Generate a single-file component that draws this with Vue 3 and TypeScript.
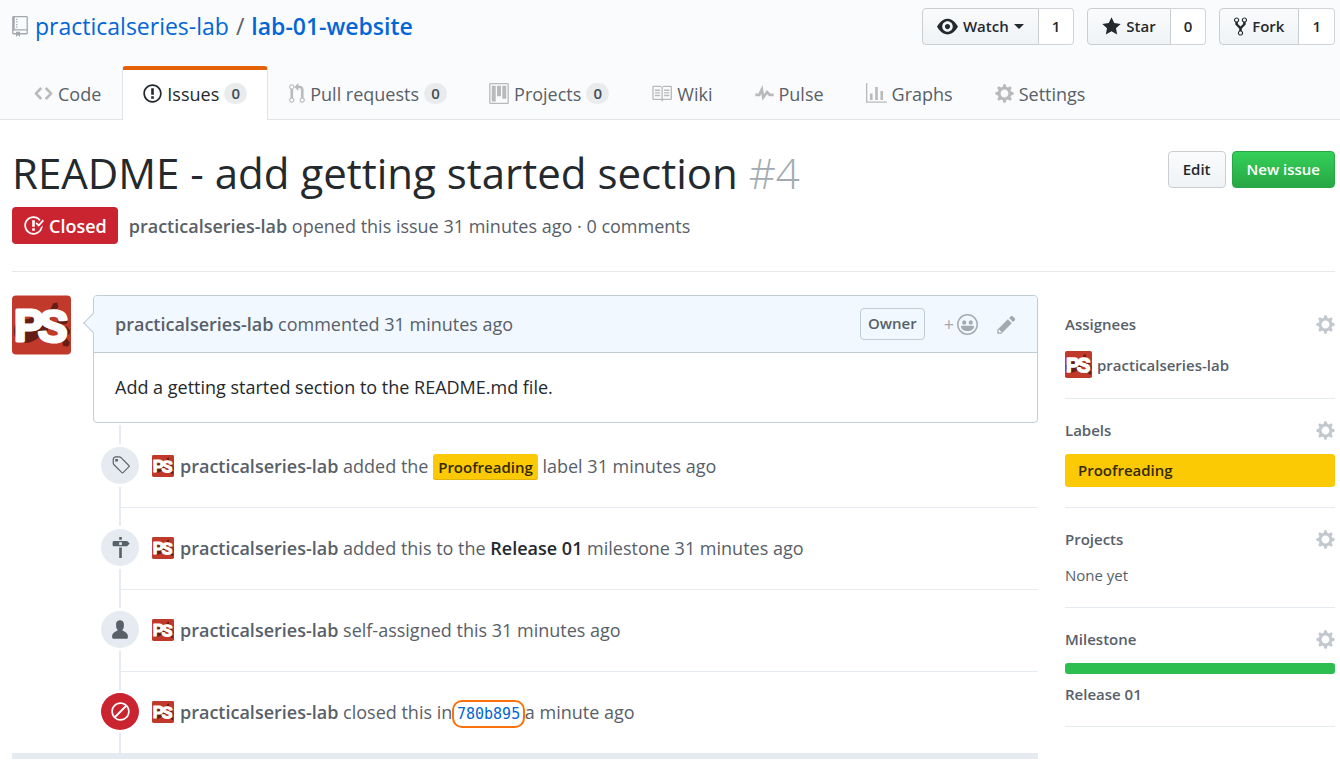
<script setup lang="ts">
import { h } from 'vue'

type Glyph = { w: number; d: string }

const glyphs: Record<string, Glyph> = {
  repo: { w: 12, d: 'M4 9H3V8h1v1zm0-3H3v1h1V6zm0-2H3v1h1V4zm0-2H3v1h1V2zm8-1v12c0 .55-.45 1-1 1H6v2l-1.5-1.5L3 16v-2H1c-.55 0-1-.45-1-1V1c0-.55.45-1 1-1h10c.55 0 1 .45 1 1zm-1 10H1v2h2v-1h3v1h5v-2zm0-10H2v9h9V1z' },
  code: { w: 14, d: 'M9.5 3L8 4.5 11.5 8 8 11.5 9.5 13 14 8 9.5 3zm-5 0L0 8l4.5 5L6 11.5 2.5 8 6 4.5 4.5 3z' },
  issue: { w: 14, d: 'M7 2.3c3.14 0 5.7 2.56 5.7 5.7s-2.56 5.7-5.7 5.7A5.71 5.71 0 0 1 1.3 8c0-3.14 2.56-5.7 5.7-5.7zM7 1C3.14 1 0 4.14 0 8s3.14 7 7 7 7-3.14 7-7-3.14-7-7-7zm1 3H6v5h2V4zm0 6H6v2h2v-2z' },
  pull: { w: 12, d: 'M11 11.28V5c-.03-.78-.34-1.47-.94-2.06C9.46 2.35 8.78 2.03 8 2H7V0L4 3l3 3V4h1c.27.02.48.11.69.31.21.2.3.42.31.69v6.28A1.993 1.993 0 0 0 10 15a1.993 1.993 0 0 0 1-3.72zm-1 2.92c-.66 0-1.2-.55-1.2-1.2 0-.65.55-1.2 1.2-1.2.65 0 1.2.55 1.2 1.2 0 .65-.55 1.2-1.2 1.2zM4 3c0-1.11-.89-2-2-2a1.993 1.993 0 0 0-1 3.72v6.56A1.993 1.993 0 0 0 2 15a1.993 1.993 0 0 0 1-3.72V4.72c.59-.34 1-.98 1-1.72zm-.8 10c0 .66-.55 1.2-1.2 1.2-.65 0-1.2-.55-1.2-1.2 0-.65.55-1.2 1.2-1.2.65 0 1.2.55 1.2 1.2zM2 4.2C1.34 4.2.8 3.65.8 3c0-.65.55-1.2 1.2-1.2.65 0 1.2.55 1.2 1.2 0 .65-.55 1.2-1.2 1.2z' },
  project: { w: 15, d: 'M10 12h3V2h-3v10zm-4-2h3V2H6v8zm-4 4h3V2H2v12zm-1 1h13V1H1v14zM14 0H1a1 1 0 0 0-1 1v14a1 1 0 0 0 1 1h13a1 1 0 0 0 1-1V1a1 1 0 0 0-1-1z' },
  book: { w: 16, d: 'M3 5h4v1H3V5zm0 3h4V7H3v1zm0 2h4V9H3v1zm11-5h-4v1h4V5zm0 2h-4v1h4V7zm0 2h-4v1h4V9zm2-6v9c0 .55-.45 1-1 1H9.5l-1 1-1-1H2c-.55 0-1-.45-1-1V3c0-.55.45-1 1-1h5.5l1 1 1-1H15c.55 0 1 .45 1 1zm-8 .5L7.5 3H2v9h6V3.5zm7-.5H9.5l-.5.5V12h6V3z' },
  pulse: { w: 14, d: 'M11.5 8L8.8 5.4 6.6 8.5 5.5 1.6 2.38 8H0v2h3.6l.9-1.8.9 5.4L9 8.5l1.6 1.5H14V8h-2.5z' },
  graph: { w: 16, d: 'M16 14v1H0V0h1v14h15zM5 13H3V8h2v5zm4 0H7V3h2v10zm4 0h-2V6h2v7z' },
  gear: { w: 14, d: 'M14 8.77v-1.6l-1.94-.64-.45-1.09.88-1.84-1.13-1.13-1.81.91-1.09-.45-.69-1.92h-1.6l-.63 1.94-1.11.45-1.84-.88-1.13 1.13.91 1.81-.45 1.09L0 7.23v1.59l1.94.64.45 1.09-.88 1.84 1.13 1.13 1.81-.91 1.09.45.69 1.92h1.59l.63-1.94 1.11-.45 1.84.88 1.13-1.13-.92-1.81.47-1.09L14 8.75v.02zM7 11c-1.66 0-3-1.34-3-3s1.34-3 3-3 3 1.34 3 3-1.34 3-3 3z' },
  eye: { w: 16, d: 'M8.06 2C3 2 0 8 0 8s3 6 8.06 6C13 14 16 8 16 8s-3-6-7.94-6zM8 12c-2.2 0-4-1.78-4-4 0-2.2 1.8-4 4-4 2.22 0 4 1.8 4 4 0 2.22-1.78 4-4 4zm2-4c0 1.11-.89 2-2 2-1.11 0-2-.89-2-2 0-1.11.89-2 2-2 1.11 0 2 .89 2 2z' },
  star: { w: 14, d: 'M14 6l-4.9-.64L7 1 4.9 5.36 0 6l3.6 3.26L2.67 14 7 11.67 11.33 14l-.93-4.74L14 6z' },
  fork: { w: 10, d: 'M8 1a1.993 1.993 0 0 0-1 3.72V6L5 8 3 6V4.72A1.993 1.993 0 0 0 2 1a1.993 1.993 0 0 0-1 3.72V6.5l3 3v1.78A1.993 1.993 0 0 0 5 15a1.993 1.993 0 0 0 1-3.72V9.5l3-3V4.72A1.993 1.993 0 0 0 8 1zM2 4.2C1.34 4.2.8 3.65.8 3c0-.65.55-1.2 1.2-1.2.65 0 1.2.55 1.2 1.2 0 .65-.55 1.2-1.2 1.2zm3 10c-.66 0-1.2-.55-1.2-1.2 0-.65.55-1.2 1.2-1.2.65 0 1.2.55 1.2 1.2 0 .65-.55 1.2-1.2 1.2zm3-10c-.66 0-1.2-.55-1.2-1.2 0-.65.55-1.2 1.2-1.2.65 0 1.2.55 1.2 1.2 0 .65-.55 1.2-1.2 1.2z' },
  closed: { w: 16, d: 'M7 10h2v2H7v-2zm2-6H7v5h2V4zm1.5 1.5l-1 1L12 9l4-4.5-1-1L12 7l-1.5-1.5zM8 13.7A5.71 5.71 0 0 1 2.3 8c0-3.14 2.56-5.7 5.7-5.7 1.83 0 3.45.88 4.5 2.2l.92-.92A6.947 6.947 0 0 0 8 1C4.14 1 1 4.14 1 8s3.14 7 7 7 7-3.14 7-7l-1.52 1.52c-.66 2.41-2.86 4.19-5.48 4.19v-.01z' },
  smiley: { w: 16, d: 'M8 0C3.58 0 0 3.58 0 8s3.58 8 8 8 8-3.58 8-8-3.58-8-8-8zm4.81 12.81a6.72 6.72 0 0 1-2.17 1.45c-.83.36-1.72.53-2.64.53-.92 0-1.81-.17-2.64-.53-.81-.34-1.55-.83-2.17-1.45a6.773 6.773 0 0 1-1.45-2.17A6.59 6.59 0 0 1 1.21 8c0-.92.17-1.81.53-2.64.34-.81.83-1.55 1.45-2.17.62-.62 1.36-1.11 2.17-1.45A6.59 6.59 0 0 1 8 1.21c.92 0 1.81.17 2.64.53.81.34 1.55.83 2.17 1.45.62.62 1.11 1.36 1.45 2.17.36.83.53 1.72.53 2.64 0 .92-.17 1.81-.53 2.64-.34.81-.83 1.55-1.45 2.17zM4 6.8v-.59c0-.66.53-1.19 1.2-1.19h.59c.66 0 1.19.53 1.19 1.19v.59c0 .67-.53 1.2-1.19 1.2H5.2C4.53 8 4 7.47 4 6.8zm5 0v-.59c0-.66.53-1.19 1.2-1.19h.59c.66 0 1.19.53 1.19 1.19v.59c0 .67-.53 1.2-1.19 1.2h-.59C9.53 8 9 7.47 9 6.8zm4 3.2c-.72 1.88-2.91 3-5 3s-4.28-1.13-5-3c-.14-.39.23-1 .66-1h8.59c.41 0 .89.61.75 1z' },
  pencil: { w: 14, d: 'M0 12v3h3l8-8-3-3-8 8zm3 2H1v-2h1v1h1v1zm10.3-9.3L12 6 9 3l1.3-1.3a.996.996 0 0 1 1.41 0l1.59 1.59c.39.39.39 1.02 0 1.41z' },
  tag: { w: 14, d: 'M7.73 1.73C7.26 1.26 6.62 1 5.96 1H3.5C2.13 1 1 2.13 1 3.5v2.47c0 .66.27 1.3.73 1.77l6.06 6.06c.39.39 1.02.39 1.41 0l4.59-4.59a.996.996 0 0 0 0-1.41L7.73 1.73zM2.38 7.09c-.31-.3-.47-.7-.47-1.13V3.5c0-.88.72-1.59 1.59-1.59h2.47c.42 0 .83.16 1.13.47l6.14 6.13-4.73 4.73-6.13-6.15zM3.01 3h2v2H3V3h.01z' },
  milestone: { w: 14, d: 'M8 2H6V0h2v2zm4 5H2c-.55 0-1-.45-1-1V4c0-.55.45-1 1-1h10l2 2-2 2zM8 4H6v2h2V4zM6 16h2V8H6v8z' },
  person: { w: 12, d: 'M12 14.002a.998.998 0 0 1-.998.998H1.001A1 1 0 0 1 0 13.999V13c0-2.633 4-4 4-4s.229-.409 0-1c-.841-.62-.944-1.59-1-4 .173-2.413 1.867-3 3-3s2.827.586 3 3c-.056 2.41-.159 3.38-1 4-.229.59 0 1 0 1s4 1.367 4 4v1.002z' },
  slash: { w: 14, d: 'M7 1C3.14 1 0 4.14 0 8s3.14 7 7 7 7-3.14 7-7-3.14-7-7-7zm0 1.3c1.3 0 2.5.44 3.47 1.17l-8 8A5.755 5.755 0 0 1 1.3 8c0-3.14 2.56-5.7 5.7-5.7zm0 11.41c-1.3 0-2.5-.44-3.47-1.17l8-8c.73.97 1.17 2.17 1.17 3.47 0 3.14-2.56 5.7-5.7 5.7z' },
}

const Icon = (props: { name: string }) => {
  const g = glyphs[props.name]
  return h(
    'svg',
    {
      viewBox: `0 0 ${g.w} 16`,
      width: Math.round((g.w * 4) / 3),
      height: 21,
      fill: 'currentColor',
      'fill-rule': 'evenodd',
      'aria-hidden': 'true',
    },
    [h('path', { d: g.d })],
  )
}
Icon.props = ['name']

const Avatar = () =>
  h('svg', { viewBox: '0 0 60 60', role: 'img', 'aria-label': 'practicalseries-lab' }, [
    h('rect', { width: 60, height: 60, rx: 4, fill: '#c0392b' }),
    h('path', {
      fill: '#641e16',
      d: 'M2 36c0-8 6-12 14-12l22-8 4-8 4-1 1 5-7 9-4 16-12 8c-6 4-12 4-17 1-4-3-5-6-5-10zM46 26l8-2 3 3-2 2-8 1zM55 31l4 4v4l-4 2-4-4zM55 43l4 5-2 4-5-1-1-4z',
    }),
    h(
      'g',
      {
        fill: '#fff',
        stroke: '#fff',
        'stroke-width': 3,
        'stroke-linejoin': 'round',
        'font-family': '"Liberation Sans", sans-serif',
        'font-weight': 700,
        'font-size': 45,
      },
      [
        h('text', { x: 2, y: 46 }, 'P'),
        h('text', { x: 27, y: 47, transform: 'rotate(5 42 30)' }, 'S'),
      ],
    ),
  ])

const actions = [
  { icon: 'eye', label: 'Watch', count: 1, menu: true },
  { icon: 'star', label: 'Star', count: 0, menu: false },
  { icon: 'fork', label: 'Fork', count: 1, menu: false },
]

const tabs: { icon: string; label: string; count?: number; current?: boolean }[] = [
  { icon: 'code', label: 'Code' },
  { icon: 'issue', label: 'Issues', count: 0, current: true },
  { icon: 'pull', label: 'Pull requests', count: 0 },
  { icon: 'project', label: 'Projects', count: 0 },
  { icon: 'book', label: 'Wiki' },
  { icon: 'pulse', label: 'Pulse' },
  { icon: 'graph', label: 'Graphs' },
  { icon: 'gear', label: 'Settings' },
]

const user = 'practicalseries-lab'

type Event = {
  icon: string
  before: string
  after: string
  kind: 'label' | 'milestone' | 'commit' | 'plain'
  target?: string
}

const events: Event[] = [
  { icon: 'tag', before: 'added the', kind: 'label', target: 'Proofreading', after: 'label 31 minutes ago' },
  { icon: 'milestone', before: 'added this to the', kind: 'milestone', target: 'Release 01', after: 'milestone 31 minutes ago' },
  { icon: 'person', before: 'self-assigned this', kind: 'plain', after: '31 minutes ago' },
  { icon: 'slash', before: 'closed this in', kind: 'commit', target: '780b895', after: 'a minute ago' },
]
</script>

<template>
  <div class="page">
    <header class="repo-head">
      <div class="repo-bar">
        <h1 class="repo-name">
          <Icon name="repo" class="repo-icon" />
          <a href="#">{{ user }}</a>
          <span class="sep">/</span>
          <a href="#" class="strong">lab-01-website</a>
        </h1>
        <div class="actions">
          <div v-for="a in actions" :key="a.label" class="action">
            <button type="button" class="btn">
              <Icon :name="a.icon" />{{ a.label }}<span v-if="a.menu" class="caret"></span>
            </button>
            <a href="#" class="social">{{ a.count }}</a>
          </div>
        </div>
      </div>
      <nav class="tabs" aria-label="Repository">
        <a v-for="t in tabs" :key="t.label" href="#" class="tab" :class="{ current: t.current }">
          <Icon :name="t.icon" />{{ t.label }}<span v-if="t.count !== undefined" class="counter">{{ t.count }}</span>
        </a>
      </nav>
    </header>

    <main class="content">
      <section class="issue-head">
        <div class="title-row">
          <h2 class="title">README - add getting started section <span class="number">#4</span></h2>
          <div class="title-actions">
            <button type="button" class="btn">Edit</button>
            <button type="button" class="btn primary">New issue</button>
          </div>
        </div>
        <div class="meta">
          <span class="state"><Icon name="closed" />Closed</span>
          <span><a href="#" class="strong">{{ user }}</a> opened this issue 31 minutes ago · 0 comments</span>
        </div>
      </section>

      <div class="columns">
        <section class="discussion">
          <div class="thread">
            <Avatar class="avatar-large" />
            <article class="comment">
              <header class="comment-head">
                <p><a href="#" class="strong">{{ user }}</a> commented 31 minutes ago</p>
                <div class="comment-tools">
                  <span class="owner">Owner</span>
                  <button type="button" class="icon-btn" aria-label="Add your reaction"><span class="plus">+</span><Icon name="smiley" /></button>
                  <button type="button" class="icon-btn" aria-label="Edit comment"><Icon name="pencil" /></button>
                </div>
              </header>
              <p class="comment-body">Add a getting started section to the README.md file.</p>
            </article>
          </div>

          <ol class="timeline">
            <li v-for="e in events" :key="e.icon" class="event">
              <span class="dot" :class="{ red: e.kind === 'commit' }"><Icon :name="e.icon" /></span>
              <Avatar class="avatar-small" />
              <p>
                <a href="#" class="strong">{{ user }}</a> {{ e.before }}
                <a v-if="e.kind === 'label'" href="#" class="label">{{ e.target }}</a>
                <a v-else-if="e.kind === 'milestone'" href="#" class="milestone">{{ e.target }}</a>
                <a v-else-if="e.kind === 'commit'" href="#" class="commit">{{ e.target }}</a>
                {{ e.after }}
              </p>
            </li>
          </ol>
        </section>

        <aside class="sidebar">
          <section class="side">
            <div class="side-head assignees-head"><h3>Assignees</h3><button type="button" class="icon-btn gear" aria-label="Edit assignees"><Icon name="gear" /></button></div>
            <a href="#" class="assignee"><Avatar class="avatar-medium" />{{ user }}</a>
          </section>
          <section class="side">
            <div class="side-head"><h3>Labels</h3><button type="button" class="icon-btn gear" aria-label="Edit labels"><Icon name="gear" /></button></div>
            <a href="#" class="label-wide">Proofreading</a>
          </section>
          <section class="side">
            <div class="side-head"><h3>Projects</h3><button type="button" class="icon-btn gear" aria-label="Edit projects"><Icon name="gear" /></button></div>
            <p>None yet</p>
          </section>
          <section class="side">
            <div class="side-head"><h3>Milestone</h3><button type="button" class="icon-btn gear" aria-label="Edit milestone"><Icon name="gear" /></button></div>
            <div class="progress" role="img" aria-label="100% complete"></div>
            <a href="#" class="strong">Release 01</a>
          </section>
        </aside>
      </div>
    </main>
  </div>
</template>

<style>
body {
  margin: 0;
  background: #fff;
}
</style>

<style scoped>
.page {
  color: #586069;
  font-family: "Open Sans", "Noto Sans", sans-serif;
  font-size: 18px;
  line-height: 24px;
}
h1, h2, h3, p, ol {
  margin: 0;
  padding: 0;
  font-weight: 400;
}
a {
  color: inherit;
  text-decoration: none;
}
button {
  font: inherit;
  cursor: pointer;
}
svg {
  display: block;
  flex: none;
}
.strong {
  font-weight: 600;
}

.repo-head {
  background: #fafbfc;
  border-bottom: 1px solid #e1e4e8;
}
.repo-bar {
  display: flex;
  justify-content: space-between;
  align-items: flex-start;
  height: 58px;
  padding: 8px 5px 0 12px;
}
.repo-name {
  display: flex;
  align-items: center;
  gap: 7px;
  font-size: 23px;
  line-height: 37px;
}
.repo-name a {
  color: #0366d6;
}
.repo-icon {
  color: #a3a8ad;
}
.actions {
  display: flex;
  gap: 13px;
}
.action {
  display: flex;
}
.btn {
  display: flex;
  align-items: center;
  justify-content: center;
  gap: 5px;
  height: 37px;
  padding: 0 14px 1px;
  border: 1px solid #cbced1;
  border-radius: 4px;
  background: linear-gradient(#fafbfc, #eff3f6);
  color: #24292e;
  font-size: 15px;
  font-weight: 600;
  white-space: nowrap;
}
.action .btn {
  border-radius: 4px 0 0 4px;
}
.social {
  display: flex;
  align-items: center;
  padding: 0 13px 1px;
  border: 1px solid #d1d5da;
  border-left: 0;
  border-radius: 0 4px 4px 0;
  background: #fff;
  color: #24292e;
  font-size: 15px;
  font-weight: 600;
}
.caret {
  border: 5px solid transparent;
  border-top-color: currentColor;
  border-bottom: 0;
}
.tabs {
  display: flex;
  height: 54px;
  margin-bottom: -1px;
  padding-left: 13px;
}
.tab {
  display: flex;
  align-items: center;
  gap: 5px;
  padding: 0 20px 3px;
  border: 1px solid transparent;
  border-top: 4px solid transparent;
  border-bottom: 0;
  border-radius: 4px 4px 0 0;
  white-space: nowrap;
}
.tab svg {
  color: #b8babc;
}
.current {
  border-color: #e36209 #e1e4e8 transparent;
  background: #fff;
  color: #24292e;
}
.current svg {
  color: #24292e;
}
.counter {
  min-width: 9px;
  padding: 0 7px;
  border-radius: 11px;
  background: #e9ebec;
  color: #444d56;
  font-size: 15px;
  font-weight: 600;
  line-height: 21px;
  text-align: center;
}

.content {
  padding: 27px 5px 0 12px;
}
.issue-head {
  padding-bottom: 27px;
  border-bottom: 1px solid #e6e8eb;
}
.title-row {
  display: flex;
  justify-content: space-between;
  align-items: flex-start;
}
.title {
  color: #24292e;
  font-size: 42px;
  line-height: 52px;
}
.number {
  color: #a3aab1;
  font-weight: 300;
}
.title-actions {
  display: flex;
  gap: 6px;
  padding-top: 4px;
}
.primary {
  border-color: #28a745;
  background: linear-gradient(#34d058, #28a745);
  color: #fff;
}
.meta {
  display: flex;
  align-items: center;
  gap: 11px;
  margin-top: 8px;
}
.state {
  display: flex;
  align-items: center;
  gap: 5px;
  height: 37px;
  padding: 0 11px;
  border-radius: 4px;
  background: #cb2431;
  color: #fff;
  font-weight: 600;
}

.columns {
  display: grid;
  grid-template-columns: minmax(0, 1fr) 270px;
  gap: 27px;
  margin-top: 23px;
}
.discussion {
  border-bottom: 6px solid #e6ebf1;
}
.thread {
  display: flex;
  gap: 22px;
}
.avatar-large {
  width: 59px;
  height: 60px;
}
.avatar-medium {
  width: 27px;
  height: 27px;
}
.avatar-small {
  width: 22px;
  height: 22px;
}
.comment {
  position: relative;
  flex: 1;
  border: 1px solid #c0ccd6;
  border-radius: 4px;
}
.comment::before {
  content: "";
  position: absolute;
  top: 20px;
  left: -8px;
  width: 13px;
  height: 13px;
  border: 1px solid #c0ccd6;
  border-width: 0 0 1px 1px;
  background: #f1f8ff;
  transform: rotate(45deg);
}
.comment-head {
  display: flex;
  align-items: center;
  justify-content: space-between;
  height: 56px;
  padding: 0 21px;
  border-bottom: 1px solid #c0ccd6;
  border-radius: 3px 3px 0 0;
  background: #f1f8ff;
}
.comment-tools {
  display: flex;
  align-items: center;
  gap: 19px;
}
.owner {
  padding: 2px 7px 4px;
  border: 1px solid #c0ccd6;
  border-radius: 4px;
  font-size: 15px;
  font-weight: 600;
}
.icon-btn {
  display: flex;
  align-items: center;
  gap: 3px;
  padding: 0;
  border: 0;
  background: none;
  color: #a3aab1;
}
.gear {
  color: #c3c8cf;
}
.comment-body {
  padding: 22px 21px 23px;
  color: #24292e;
}
.timeline {
  margin: 2px 0 0 107px;
  border-left: 2px solid #e6ebf1;
  list-style: none;
}
.event {
  display: flex;
  align-items: center;
  height: 82px;
}
.event + .event {
  box-shadow: inset 0 1px #e6ebf1;
}
.dot {
  display: flex;
  align-items: center;
  justify-content: center;
  width: 38px;
  height: 37px;
  margin: 0 13px 2px -20px;
  border-radius: 50%;
  background: #e6ebf1;
  box-shadow: 0 0 0 3px #fff;
}
.red {
  background: #cb2431;
  color: #fff;
}
.event p {
  margin-left: 6px;
}
.label {
  padding: 3px 5px;
  border-radius: 3px;
  background: #fbca04;
  box-shadow: inset 0 -1px #dfb40c;
  color: #332900;
  font-size: 15px;
  font-weight: 600;
}
.milestone {
  color: #24292e;
  font-weight: 600;
}
.commit {
  margin: 0 -5px;
  padding: 3px;
  border: 2px solid #f9720e;
  border-radius: 10px;
  color: #0366d6;
  font-family: "DejaVu Sans Mono", monospace;
  font-size: 15px;
  line-height: 15px;
}

.side {
  padding: 19px 0 20px;
  border-bottom: 1px solid #e6ebf1;
  font-size: 15px;
}
.side-head {
  display: flex;
  align-items: center;
  justify-content: space-between;
  margin-bottom: 12px;
}
.assignees-head {
  margin: -2px 0 15px;
}
.side-head h3 {
  font-size: 15px;
  font-weight: 600;
}
.assignee {
  display: flex;
  align-items: center;
  gap: 5px;
  font-weight: 600;
}
.label-wide {
  display: block;
  padding: 4px 13px 5px;
  border-radius: 3px;
  background: #fbca04;
  color: #332900;
  font-weight: 600;
}
.progress {
  height: 11px;
  margin-bottom: 8px;
  border-radius: 3px;
  background: #2cbe4e;
}
</style>
